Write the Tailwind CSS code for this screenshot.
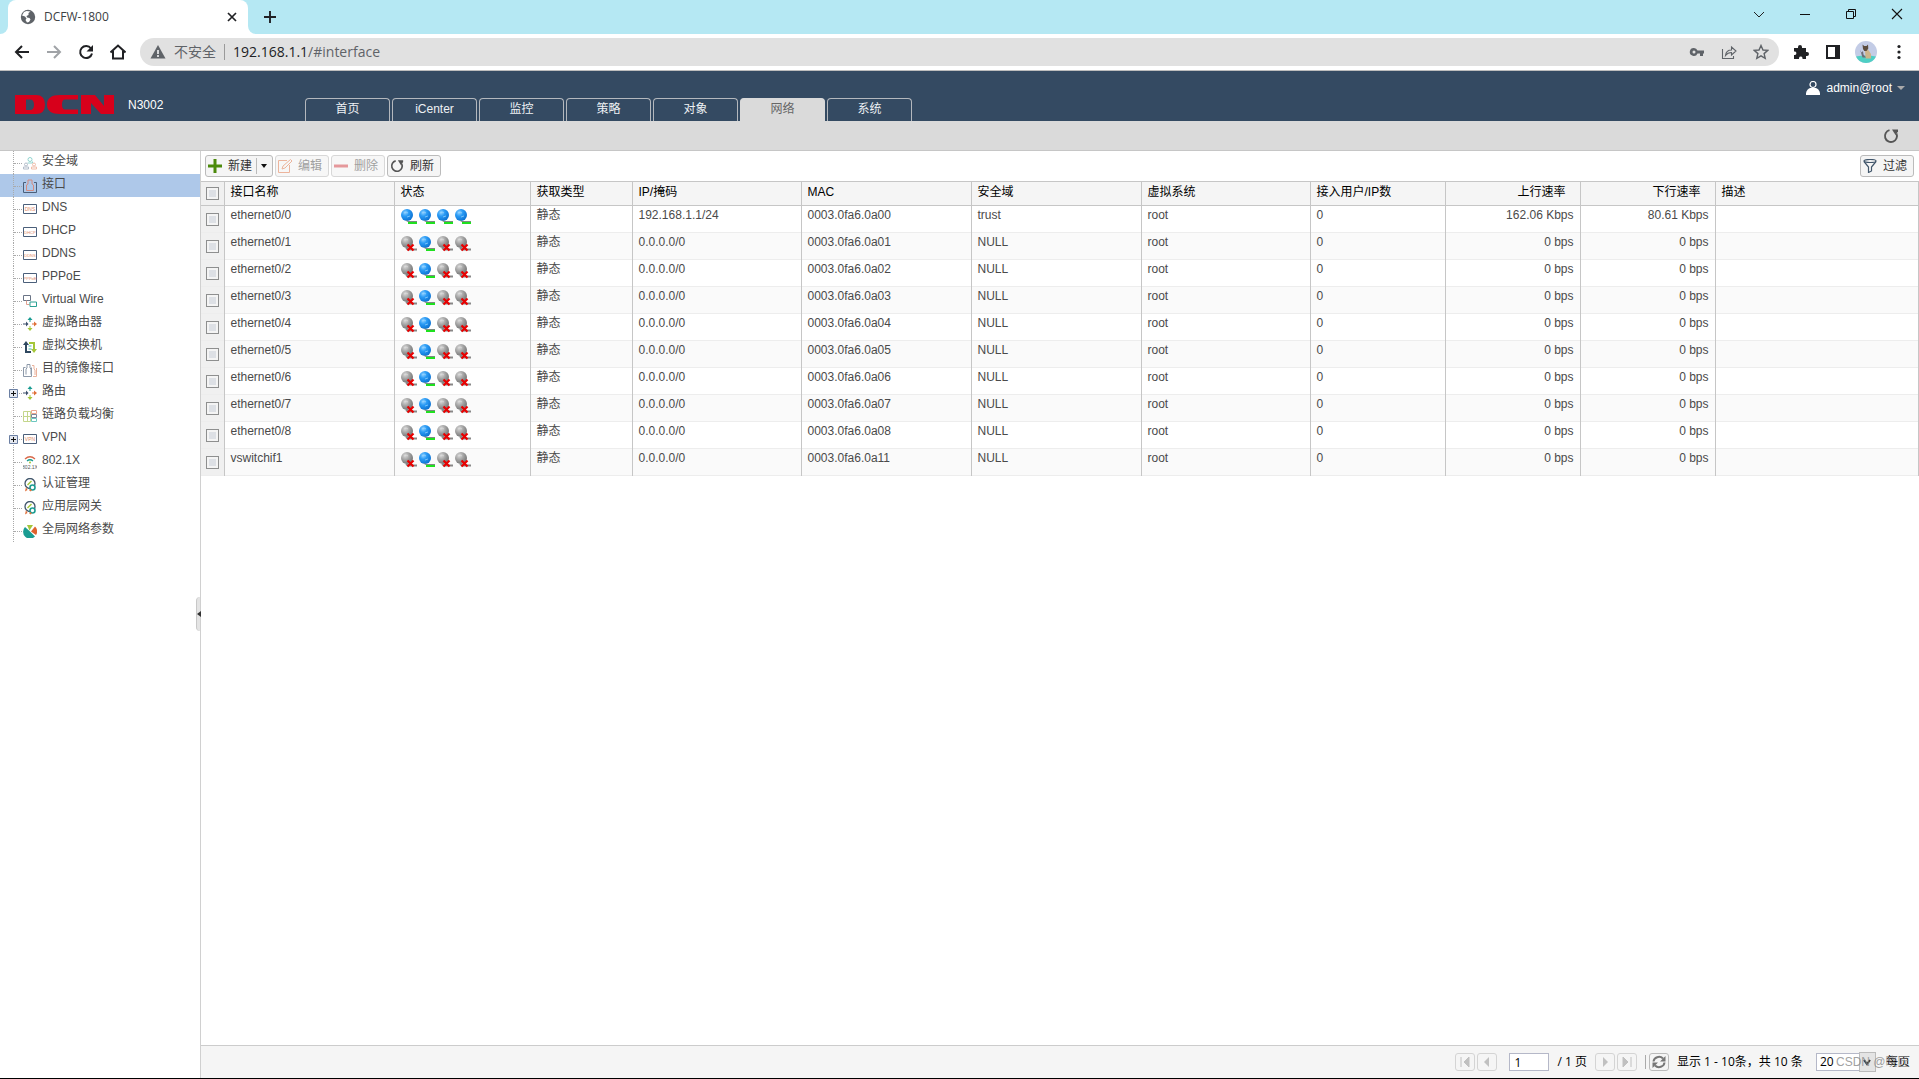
<!DOCTYPE html>
<html lang="zh-CN">
<head>
<meta charset="utf-8">
<title>DCFW-1800</title>
<script src="https://cdn.jsdelivr.net/npm/@tailwindcss/browser@4"></script>
</head>
<body class="flex h-screen flex-col overflow-hidden bg-white font-['Liberation_Sans','Noto_Sans_CJK_SC',sans-serif] text-xs text-[#4a4a4a]">

<!-- Shared icons -->
<svg class="absolute size-0" aria-hidden="true">
  <defs>
    <radialGradient id="gBlue" cx="35%" cy="30%" r="75%"><stop offset="0" stop-color="#8fd0ff"/><stop offset=".4" stop-color="#2a9bf5"/><stop offset="1" stop-color="#0a6fd0"/></radialGradient>
    <radialGradient id="gGrey" cx="35%" cy="30%" r="75%"><stop offset="0" stop-color="#d8d8d8"/><stop offset=".5" stop-color="#a0a0a0"/><stop offset="1" stop-color="#707070"/></radialGradient>
  </defs>
  <symbol id="up" viewBox="0 0 16 16"><circle cx="6" cy="6" r="6" fill="url(#gBlue)"/><path d="M3 4l2-1 2 1M6 8l3-1" stroke="#9ad6ff" fill="none" opacity=".7"/><path d="M5 11.500l2 1h9" stroke="#7d8a80" fill="none"/><path d="M7 14h9" stroke="#1fe01f" stroke-width="2"/></symbol>
  <symbol id="down" viewBox="0 0 16 16"><circle cx="6" cy="6" r="6" fill="url(#gGrey)"/><path d="M3 4l2-1 2 1" stroke="#ddd" fill="none" opacity=".7"/><path d="M5 12l2 1.500h9" stroke="#888" stroke-width="2" fill="none"/><path d="M6.500 8.500l6 6M12.500 8.500l-6 6" stroke="#e80000" stroke-width="2.200"/></symbol>
  <symbol id="reload" viewBox="0 0 16 16"><path d="M6.500 2.200A6 6 0 1 0 13.400 5.500" stroke="#555" stroke-width="1.900" fill="none"/><path d="M9 1.500h6v2L12.500 7z" fill="#555"/></symbol>
  <symbol id="i-zone" viewBox="0 0 14 14"><g fill="none" opacity=".75"><circle cx="7" cy="3.500" r="2" stroke="#6cc7c0"/><path d="M4.500 7h5V5.500" stroke="#6cc7c0"/><circle cx="3" cy="8.500" r="1.500" stroke="#9aa6b8"/><path d="M.5 13v-2h5v2z" stroke="#9aa6b8"/><circle cx="11" cy="8.500" r="1.500" stroke="#eba68c"/><path d="M8.500 13v-2h5v2z" stroke="#eba68c"/></g></symbol>
  <symbol id="i-port" viewBox="0 0 14 14"><path d="M3 3.500H.5v10h13v-10H11" fill="none" stroke="#4b5f7a"/><path d="M3.500 11.500V6l1.500-1V1h4v4l1.500 1v5.500z" fill="none" stroke="#d48c80"/></symbol>
  <symbol id="i-vwire" viewBox="0 0 14 14"><path d="M.5 1.500h7v5h-7z" fill="none" stroke="#6a7486"/><path d="M3.500 6.500v4h3" fill="none" stroke="#e0a090"/><path d="M7 8h6.500v4.500H7z" fill="none" stroke="#2aa093"/></symbol>
  <symbol id="i-route" viewBox="0 0 14 14"><path d="M7 0l2.500 3h-2v2h-1V3h-2z" fill="#1a9c92"/><path d="M14 7l-3 2.500v-2H9v-1h2v-2z" fill="#e0703a"/><path d="M7 14l2.500-3h-2V9h-1v2h-2z" fill="#a4c639"/><path d="M5.500 7L3 9.500v-2H0v-1h3v-2z" fill="#3c4f6b"/></symbol>
  <symbol id="i-switch" viewBox="0 0 14 14"><path d="M3 1L6 5H4v6h4v2H2V5H0z" fill="#2f4860"/><path d="M11 13l3-4h-2V2H6v2h4v5H8z" fill="#a4c639"/><path d="M5.500 6h3M5.500 9h3" stroke="#4bb8ae"/></symbol>
  <symbol id="i-mirror" viewBox="0 0 14 14"><path d="M2.500 4.500h-2v9h8v-9M3 11.500V6l1-1V1.500h3V5l1 1v5.500" fill="none" stroke="#8d99a9"/><path d="M9 2.500h2V6l1 1v5M13.500 5v8.500H10" fill="none" stroke="#eab29c"/></symbol>
  <symbol id="i-link" viewBox="0 0 14 14"><g fill="none"><path d="M.5 2.500h7v10h-7zM.5 7.500h7M4.500 2.500v10" stroke="#c4d68c"/><path d="M8.500 1.500h5v3h-5z" stroke="#eba68c"/><path d="M8.500 5.500h5v3h-5z" stroke="#7b8698"/><path d="M8.500 9.500h5v3h-5z" stroke="#6cc7c0"/></g></symbol>
  <symbol id="i-cert" viewBox="0 0 14 14"><circle cx="7" cy="5.500" r="5" fill="none" stroke="#41566b" stroke-width="1.300"/><path d="M4.500 7l4-4" stroke="#a4c639" stroke-width="1.500"/><path d="M3 9l-1 4.500 2.500-1.500" fill="#e0703a"/><circle cx="9.500" cy="9.500" r="2.500" fill="#fff" stroke="#1a9c92" stroke-width="1.600"/><path d="M7 13l1-1.500" stroke="#e0703a" stroke-width="2"/></symbol>
  <symbol id="i-pie" viewBox="0 0 14 14"><path d="M6.500 7L2 3A6.500 6.500 0 1 0 12 12.500z" fill="#1a9c92"/><path d="M6.500 6.500L4 1h6z" fill="#a4c639"/><path d="M8 7.500l4-5A7 7 0 0 1 13 11z" fill="#e0622e"/></symbol>
</svg>

<!-- Browser tab strip -->
<header class="shrink-0">
  <div class="flex h-[34px] items-stretch bg-[#b5e8f3]">
    <div class="flex w-2 items-end bg-white"><div class="h-full w-full rounded-br-lg bg-[#b5e8f3]"></div></div>
    <div class="flex w-60 items-center bg-[#b5e8f3]">
      <div class="flex h-full w-full items-center rounded-t-lg bg-white pr-2 pl-3">
        <svg class="size-4" viewBox="0 0 16 16"><circle cx="8" cy="8" r="7.200" fill="#5f6368"/><path d="M2 6.500l3 1 1.500 2-1 1.500 1.500 2.500 2-.5 1.500-2.500-1-1.500-2.500-.5-.5-1.500 2-1V4l2-1.500L6.500 2 4 3z" fill="#fff"/></svg>
        <span class="ml-2 grow font-['Open_Sans'] text-[#3c4043]">DCFW-1800</span>
        <button aria-label="关闭标签页"><svg class="size-4" viewBox="0 0 16 16"><path d="M4 4l8 8M12 4l-8 8" stroke="#202124" stroke-width="1.700"/></svg></button>
      </div>
    </div>
    <div class="flex w-2 bg-white"><div class="h-full w-full rounded-bl-lg bg-[#b5e8f3]"></div></div>
    <button class="ml-1.5" aria-label="新标签页"><svg class="size-4" viewBox="0 0 16 16"><path d="M8 2v12M2 8h12" stroke="#202124" stroke-width="1.900"/></svg></button>
    <div class="ml-auto flex items-center gap-[30px] pr-[14px] pb-1.5">
      <button aria-label="搜索标签页"><svg class="size-4" viewBox="0 0 16 16"><path d="M3 6l5 5 5-5" fill="none" stroke="#222"/></svg></button>
      <button aria-label="最小化"><svg class="size-4" viewBox="0 0 16 16"><path d="M3 8.500h10" stroke="#111"/></svg></button>
      <button aria-label="还原"><svg class="size-4" viewBox="0 0 16 16"><path d="M3.500 5.500h7v7h-7zM5.500 5.500v-2h7v7h-2" fill="none" stroke="#111"/></svg></button>
      <button aria-label="关闭"><svg class="size-4" viewBox="0 0 16 16"><path d="M3 3l10 10M13 3L3 13" stroke="#111" stroke-width="1.100"/></svg></button>
    </div>
  </div>
  <!-- Address bar -->
  <div class="flex h-[37px] items-center border-b border-[#bdbdbd] pr-3 pl-3.5">
    <div class="flex w-[126px] gap-4">
      <button aria-label="后退"><svg class="size-4" viewBox="0 0 16 16"><path d="M15 8H2M8 2L2 8l6 6" fill="none" stroke="#202124" stroke-width="2"/></svg></button>
      <button aria-label="前进"><svg class="size-4" viewBox="0 0 16 16"><path d="M1 8h13M8 2l6 6-6 6" fill="none" stroke="#a0a3a7" stroke-width="2"/></svg></button>
      <button aria-label="重新加载"><svg class="size-4" viewBox="0 0 16 16"><path d="M13 4.500A6 6 0 1 0 14 9.500" fill="none" stroke="#202124" stroke-width="2"/><path d="M15 1v6.500H8.500z" fill="#202124"/></svg></button>
      <button aria-label="主页"><svg class="size-4" viewBox="0 0 16 16"><path d="M.5 8.500L8 1.500l7.500 7M3 7v7.500h10V7" fill="none" stroke="#202124" stroke-width="2"/></svg></button>
    </div>
    <div class="flex h-7 grow items-center rounded-full bg-[#e1e1e1] px-2.5 text-sm">
      <svg class="size-4" viewBox="0 0 16 16"><path d="M8 1l7.500 13.500H.5z" fill="#5f6368"/><path d="M8 6v4M8 11v2" stroke="#fff" stroke-width="1.500"/></svg>
      <span class="ml-2 text-[#5f6368]">不安全</span>
      <span class="mx-2 h-4 w-px bg-[#9a9a9a]"></span>
      <div class="grow font-['Open_Sans'] text-[#5f6368]"><span class="text-[#202124]">192.168.1.1</span>/#interface</div>
      <div class="flex gap-4">
        <svg class="size-4" viewBox="0 0 16 16"><path d="M5 4a4 4 0 1 0 3.500 5.500H11V12h3V9.500h1v-3H8.500A4 4 0 0 0 5 4z" fill="#5f6368"/><circle cx="5" cy="8" r="1.500" fill="#e1e1e1"/></svg>
        <svg class="size-4" viewBox="0 0 16 16"><path d="M1.500 5v9.500h11V12M4.500 11.500c.5-4 3-5.500 6-5.500V3l4.500 4-4.500 4V8.500c-3 0-4.500 1-6 3z" fill="none" stroke="#5f6368" stroke-width="1.100"/></svg>
        <svg class="size-4" viewBox="0 0 16 16"><path d="M8 1.500l2 4.500 4.800.4-3.700 3.200 1.100 4.700L8 11.800l-4.200 2.500 1.100-4.700L1.200 6.400 6 6z" fill="none" stroke="#5f6368" stroke-width="1.400"/></svg>
      </div>
    </div>
    <div class="ml-3.5 flex items-center gap-4">
      <svg class="size-4" viewBox="0 0 16 16"><path d="M1 4h4V3a2 2 0 0 1 4 0v1h4v4h1a2 2 0 0 1 0 4h-1v3H9.500v-1a1.800 1.800 0 0 0-3.500 0v1H1v-4h1a1.800 1.800 0 0 0 0-3.500H1z" fill="#202124"/></svg>
      <svg class="size-4" viewBox="0 0 16 16"><path d="M1 1h14v14H1z" fill="#202124"/><path d="M3 3h7v10H3z" fill="#fff"/></svg>
      <svg class="-mx-0.5 size-[22px]" viewBox="0 0 22 22"><circle cx="11" cy="11" r="11" fill="#c3cce6"/><path d="M1 15.500q10-2 20 0A11 11 0 0 1 1 15.500z" fill="#4ecfc4"/><path d="M10 9l3-.5 3 4.500v4.500h-5.500z" fill="#cdb48a"/><path d="M7.500 3.500L9.200 5h2.300l1.500-1.500.3 4L11.500 10H9.300L8 8z" fill="#5b4c3e"/><path d="M5 8.500l1.500 3L8 10l.5 3.500 2.500 3H7.500z" fill="#6d6d78"/></svg>
      <svg class="size-4" viewBox="0 0 16 16"><g fill="#202124"><circle cx="8" cy="2.500" r="1.600"/><circle cx="8" cy="8" r="1.600"/><circle cx="8" cy="13.500" r="1.600"/></g></svg>
    </div>
  </div>
</header>

<!-- Product header -->
<div class="flex h-[50px] shrink-0 items-end bg-[#344a62] text-white">
  <div class="flex w-[305px] items-center gap-3.5 self-end pb-[7px] pl-[15px]">
    <svg class="h-[19px] w-[99px]" viewBox="0 0 99 19" role="img" aria-label="DCN"><g fill="#d7001b"><path fill-rule="evenodd" d="M0 0H21Q30 0 30 9.500 30 19 21 19H0zM11 4.500V15h4q4 0 4-5.200 0-5.300-4-5.300z"/><path d="M63 0v4.500H50q-3 0-3 5t3 5h13V19H45Q32 19 32 9.500 32 0 45 0z"/><path d="M66 0h14l9 11V0h10v19H86L76 8V19H66z"/></g></svg>
    <span>N3002</span>
  </div>
  <nav class="flex gap-0.5 text-center leading-[21px] text-[#eef1f4]">
    <a href="#home" class="h-[23px] w-[85px] rounded-t border border-b-0 border-[#b4b8bd]">首页</a>
    <a href="#icenter" class="h-[23px] w-[85px] rounded-t border border-b-0 border-[#b4b8bd]">iCenter</a>
    <a href="#monitor" class="h-[23px] w-[85px] rounded-t border border-b-0 border-[#b4b8bd]">监控</a>
    <a href="#policy" class="h-[23px] w-[85px] rounded-t border border-b-0 border-[#b4b8bd]">策略</a>
    <a href="#object" class="h-[23px] w-[85px] rounded-t border border-b-0 border-[#b4b8bd]">对象</a>
    <a href="#network" class="h-[23px] w-[85px] rounded-t border border-b-0 border-[#dadada] bg-[#dadada] text-[#666]">网络</a>
    <a href="#system" class="h-[23px] w-[85px] rounded-t border border-b-0 border-[#b4b8bd]">系统</a>
  </nav>
  <button class="mr-3.5 ml-auto flex items-center gap-1.5 self-start pt-[9px]">
    <svg class="size-3.5" viewBox="0 0 14 14"><circle cx="7" cy="3.500" r="3" fill="none" stroke="#fff" stroke-width="1.200"/><path d="M0 14V12q1-4 4-5h6q3 1 4 5v2z" fill="#fff"/></svg>
    admin@root
    <svg class="-ml-px h-1 w-2" viewBox="0 0 8 4"><path d="M0 0h8L4 4z" fill="#aaa"/></svg>
  </button>
</div>
<div class="flex h-[30px] shrink-0 items-center justify-end border-b border-[#c6c6c6] bg-[#dadada] pr-5">
  <button aria-label="刷新页面"><svg class="size-4"><use href="#reload"/></svg></button>
</div>

<div class="flex min-h-0 grow">
  <!-- Navigation tree -->
  <aside class="relative w-[201px] shrink-0 border-r border-[#d0d0d0]">
    <ul id="tree"></ul>
    <button class="absolute right-0 bottom-[447px] flex h-[34px] w-1 items-center rounded-l-sm border-l border-[#c8c8c8] bg-[#e4e4e4]" aria-label="折叠"><svg class="h-1.5 w-1 shrink-0" viewBox="0 0 4 6"><path d="M4 0v6L0 3z" fill="#333"/></svg></button>
  </aside>

  <main class="flex min-w-0 grow flex-col">
    <div class="flex h-[30px] shrink-0 items-center gap-0.5 pr-[5px] pl-1 text-[#333]">
      <button class="flex h-[22px] w-[68px] items-center rounded-[3px] border border-[#bbb] bg-[#f5f5f5] pl-0.5"><svg class="size-3.5" viewBox="0 0 14 14"><path d="M7 0v14M0 7h14" stroke="#4c8a0b" stroke-width="3"/></svg><span class="ml-1.5">新建</span><span class="mr-1 ml-1 h-4 w-px bg-[#bbb]"></span><svg class="h-1 w-1.5" viewBox="0 0 6 4"><path d="M0 0h6L3 4z" fill="#111"/></svg></button>
      <button disabled class="flex h-[22px] w-[54px] items-center gap-1.5 rounded-[3px] border border-[#d8d8d8] bg-[#f7f7f7] pl-0.5 text-[#a0a0a0]"><svg class="size-3.5" viewBox="0 0 14 14"><path d="M9 1.500H.5v12h11V6M4 10l1-3 7.500-6.500L14 2 7 9z" fill="none" stroke="#ecb49c"/></svg>编辑</button>
      <button disabled class="flex h-[22px] w-[54px] items-center gap-1.5 rounded-[3px] border border-[#d8d8d8] bg-[#f7f7f7] pl-0.5 text-[#a0a0a0]"><svg class="size-3.5" viewBox="0 0 14 14"><path d="M0 7h14" stroke="#e5989b" stroke-width="3"/></svg>删除</button>
      <button class="flex h-[22px] w-[54px] items-center gap-1.5 rounded-[3px] border border-[#bbb] bg-[#f5f5f5] pl-0.5"><svg class="size-3.5"><use href="#reload"/></svg>刷新</button>
      <button class="ml-auto flex h-[22px] w-[54px] items-center gap-1.5 rounded-[3px] border border-[#bbb] bg-[#f5f5f5] pl-0.5"><svg class="size-3.5" viewBox="0 0 14 14"><ellipse cx="7" cy="2" rx="6" ry="1.500" fill="none" stroke="#41566b" stroke-width="1.200"/><path d="M1 2.500L5.500 8v5.500L8.500 12V8L13 2.500" fill="none" stroke="#41566b" stroke-width="1.200"/></svg>过滤</button>
    </div>

    <table class="w-full table-fixed border-collapse leading-4">
      <colgroup><col class="w-[23px]"><col class="w-[170px]"><col class="w-[136px]"><col class="w-[102px]"><col class="w-[169px]"><col class="w-[170px]"><col class="w-[170px]"><col class="w-[169px]"><col class="w-[135px]"><col class="w-[135px]"><col class="w-[135px]"><col></colgroup>
      <thead>
        <tr id="head" class="h-6 border-y border-[#c6c6c6] bg-[#f5f5f5] text-black"></tr>
      </thead>
      <tbody id="rows"></tbody>
    </table>

    <!-- Paging -->
    <footer class="mt-auto flex h-[33px] shrink-0 items-center border-t border-[#ccc] bg-[#f5f5f5] pr-[9px] font-['Open_Sans','Noto_Sans_CJK_SC',sans-serif] text-black">
      <div class="ml-auto flex items-center gap-0.5">
        <button disabled aria-label="第一页" class="flex h-[18px] w-5 items-center justify-center rounded-[3px] border border-[#d4d4d4]"><svg class="size-2.5" viewBox="0 0 10 10"><path d="M1 0v10M9 0v10L4 5z" fill="#c0c0c0" stroke="#c0c0c0"/></svg></button>
        <button disabled aria-label="上一页" class="flex h-[18px] w-5 items-center justify-center rounded-[3px] border border-[#d4d4d4]"><svg class="size-2.5" viewBox="0 0 10 10"><path d="M7 0v10L2 5z" fill="#c0c0c0"/></svg></button>
      </div>
      <input aria-label="页码" value="1" class="ml-3 h-[18px] w-10 border border-[#b5b8c8] bg-white px-1">
      <span class="ml-2">/ 1 页</span>
      <div class="ml-2 flex items-center gap-0.5">
        <button disabled aria-label="下一页" class="flex h-[18px] w-5 items-center justify-center rounded-[3px] border border-[#d4d4d4]"><svg class="size-2.5" viewBox="0 0 10 10"><path d="M3 0v10L8 5z" fill="#c0c0c0"/></svg></button>
        <button disabled aria-label="最后一页" class="flex h-[18px] w-5 items-center justify-center rounded-[3px] border border-[#d4d4d4]"><svg class="size-2.5" viewBox="0 0 10 10"><path d="M9 0v10M1 0v10L6 5z" fill="#c0c0c0" stroke="#c0c0c0"/></svg></button>
      </div>
      <span class="mr-[3px] ml-2 h-3.5 w-px bg-[#aaa]"></span>
      <button aria-label="刷新列表" class="flex h-[18px] w-5 items-center justify-center rounded-[3px] border border-[#bbb]"><svg class="size-3.5" viewBox="0 0 14 14"><path d="M1.500 6.500A5.500 5 0 0 1 11 3.500M12.500 7.500A5.500 5 0 0 1 3 10.500" fill="none" stroke="#777" stroke-width="2"/><path d="M13.500 1v5.500H8zM.5 13V7.500H6z" fill="#777"/></svg></button>
      <span class="ml-2 w-[139px] whitespace-nowrap">显示 1 - 10条，共 10 条</span>
      <div class="relative flex items-center">
        <label class="order-2 ml-2.5" for="size">每页</label>
        <select id="size" class="h-[18px] w-[43px] appearance-none border border-r-0 border-[#b5b8c8] bg-white px-[3px]"><option>20</option></select>
        <span class="flex h-5 w-[17px] items-center justify-center border border-[#bbb] bg-[#e4e4e4]"><svg class="size-2" viewBox="0 0 8 8"><path d="M1 2l3 4 3-4" fill="none" stroke="#333" stroke-width="2"/></svg></span>
        <span class="absolute top-0.5 left-5 font-['Liberation_Sans','Noto_Sans_CJK_SC',sans-serif] whitespace-nowrap text-[#888]/80">CSDN @晓匠</span>
      </div>
    </footer>
  </main>
</div>
<div class="h-px shrink-0 bg-black"></div>

<script>
const tree = [
  ['安全域','i-zone'],['接口','i-port'],['DNS','DNS'],['DHCP','DHCP'],['DDNS','DDNS'],['PPPoE','PPPoE'],
  ['Virtual Wire','i-vwire'],['虚拟路由器','i-route'],['虚拟交换机','i-switch'],['目的镜像接口','i-mirror'],
  ['路由','i-route',true],['链路负载均衡','i-link'],['VPN','VPN',true],['802.1X','wifi'],
  ['认证管理','i-cert'],['应用层网关','i-cert'],['全局网络参数','i-pie']
];
const icon = n => {
  if (n.startsWith('i-')) return `<svg class="size-3.5"><use href="#${n}"/></svg>`;
  if (n === 'wifi') return `<svg class="size-3.5" viewBox="0 0 14 14"><path d="M2 4q5-4.500 10 0" fill="none" stroke="#d9694a" stroke-width="1.300"/><path d="M4 6q3-2.500 6 0" fill="none" stroke="#1a9c92" stroke-width="1.300"/><circle cx="7" cy="7.500" r="1" fill="#a4c639"/><text x="7" y="13.500" font-size="5" text-anchor="middle" fill="#555">802.1X</text></svg>`;
  return `<svg class="size-3.5" viewBox="0 0 14 14"><path d="M.5 2.500h13v9H.5z" fill="#fff" stroke="#4b5f7a"/><text x="7" y="9" font-size="${n.length > 3 ? 4 : 5}" text-anchor="middle" fill="#e08a68">${n}</text></svg>`;
};
document.getElementById('tree').innerHTML = tree.map(([t, i, plus]) => `
  <li class="${t === '接口' ? 'h-[23px] bg-[#aec8e9]' : 'h-[23px]'}">
    <a href="#" class="flex h-full items-center pl-[9px]">
      <span class="relative ml-1 h-full w-2.5 border-l border-dotted border-[#aaa]"><span class="absolute top-3 left-0 w-2 border-t border-dotted border-[#aaa]"></span>${plus ? '<svg class="absolute top-2 -left-[5px] size-[9px]" viewBox="0 0 9 9"><path d="M.5.5h8v8h-8z" fill="#e4e8f0" stroke="#6b7fa3"/><path d="M2 4.500h5M4.500 2v5" stroke="#111"/></svg>' : ''}</span>
      ${icon(i)}<span class="-mt-1 ml-[5px]">${t}</span>
    </a>
  </li>`).join('');

const box = label => `<td class="border-r border-[#c6c6c6] bg-[#f0f0f0] pl-[5px] align-middle"><input type="checkbox" aria-label="${label}" class="block size-[13px] appearance-none border border-[#8e8f8f] bg-[#dde0e5] shadow-[inset_0_0_0_2px_#f4f4f4]"></td>`;
const cell = v => `<td class="border-r border-[#c6c6c6] px-1.5 pt-px align-top">${v}</td>`;
const num = v => `<td class="border-r border-[#c6c6c6] px-1.5 pt-px text-right align-top">${v}</td>`;

document.getElementById('head').innerHTML = box('全选') +
  ['接口名称','状态','获取类型','IP/掩码','MAC','安全域','虚拟系统','接入用户/IP数'].map(h => `<th class="border-r border-[#c6c6c6] px-1.5 pt-0.5 text-left align-top font-normal">${h}</th>`).join('') +
  ['上行速率','下行速率'].map(h => `<th class="border-r border-[#c6c6c6] px-3.5 pt-0.5 text-right align-top font-normal">${h}</th>`).join('') +
  '<th class="border-r border-[#c6c6c6] px-1.5 pt-0.5 text-left align-top font-normal">描述</th>';

const names = [0,1,2,3,4,5,6,7,8].map(n => 'ethernet0/' + n).concat('vswitchif1');
document.getElementById('rows').innerHTML = names.map((n, i) => {
  const states = i ? ['down','up','down','down'] : ['up','up','up','up'];
  const status = '<div class="flex gap-0.5 pt-0.5">' + states.map(s => `<svg class="size-4"><use href="#${s}"/></svg>`).join('') + '</div>';
  return `<tr class="${i % 2 ? 'h-[27px] border-b border-[#ededed] bg-[#fafafa]' : 'h-[27px] border-b border-[#ededed] bg-white'}">` + box(n) + cell(n) + cell(status) + cell('静态') +
    cell(i ? '0.0.0.0/0' : '192.168.1.1/24') + cell('0003.0fa6.0a' + (i === 9 ? '11' : '0' + i)) +
    cell(i ? 'NULL' : 'trust') + cell('root') + cell('0') +
    num(i ? '0 bps' : '162.06 Kbps') + num(i ? '0 bps' : '80.61 Kbps') + cell('') + '</tr>';
}).join('');
</script>
</body>
</html>
